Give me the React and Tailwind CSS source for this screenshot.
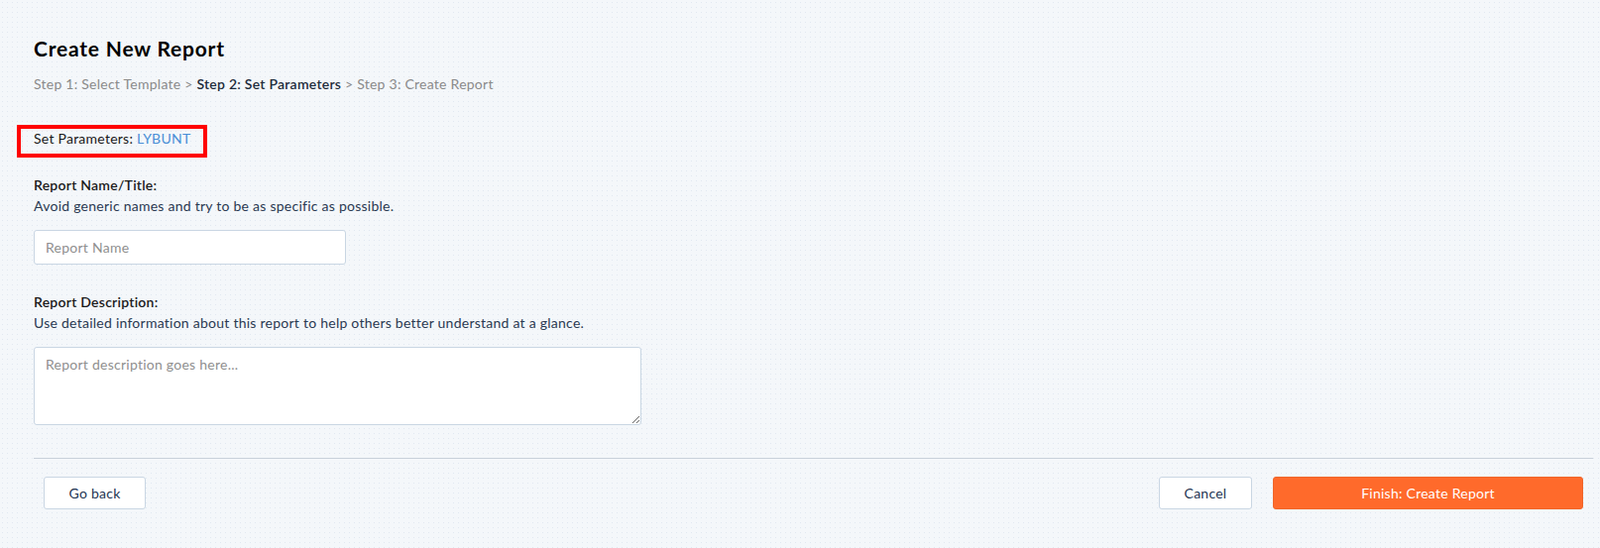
export default function App() {
    return (
        <div className="min-h-[553px] w-full bg-[#f4f7fa] bg-[radial-gradient(#e1e8f1_0.8px,transparent_0.8px)] bg-[size:5px_5px] pl-[34px] pr-[7px] pt-[35px] font-['Lato','Liberation_Sans',sans-serif] tracking-[0.25px]">
            <h1 className="text-[21px] leading-[28px] font-bold tracking-[0.8px] text-black">Create New Report</h1>
            <p className="mt-[12px] text-[14px] leading-[20px] text-[#8a8a8a]">
                Step 1: Select Template &gt;{' '}
                <span className="font-semibold text-[#1d2b3a]">Step 2: Set Parameters</span>{' '}
                &gt; Step 3: Create Report
            </p>

            <div className="mt-[31px] -ml-[17px] w-fit border-4 border-[#ff0000] px-[13px] pt-0 pb-[5px]">
                <p className="text-[14px] leading-[20px] text-[#1a1a1a]">
                    Set Parameters: <span className="text-[#4a8fd6]">LYBUNT</span>
                </p>
            </div>

            <div className="mt-[17px]">
                <label htmlFor="name" className="block text-[14px] leading-[21px] font-semibold text-[#1a1a1a]">
                    Report Name/Title:
                </label>
                <p className="text-[14px] leading-[21px] text-[#2b3a52]">
                    Avoid generic names and try to be as specific as possible.
                </p>
                <input
                    id="name"
                    type="text"
                    placeholder="Report Name"
                    className="mt-[14px] block h-[35px] w-[315px] rounded-[3px] border border-[#c9d6e3] bg-white px-[11px] text-[14px] text-[#222] placeholder:text-[#8f8f8f] outline-none"
                />
            </div>

            <div className="mt-[27px]">
                <label htmlFor="desc" className="block text-[14px] leading-[21px] font-semibold text-[#1a1a1a]">
                    Report Description:
                </label>
                <p className="text-[14px] leading-[21px] text-[#2b3a52]">
                    Use detailed information about this report to help others better understand at a glance.
                </p>
                <textarea
                    id="desc"
                    placeholder="Report description goes here..."
                    className="mt-[14px] block h-[79px] w-[613px] rounded-[3px] border border-[#c9d6e3] bg-white px-[11px] py-[7px] text-[14px] leading-[20px] text-[#222] placeholder:text-[#8f8f8f] outline-none"
                />
            </div>

            <div className="mt-[33px] border-t border-[#c8d0da]" />

            <div className="flex items-center justify-between px-[10px] pt-[18px]">
                <button className="h-[33px] w-[103px] rounded-[3px] border border-[#c9d6e3] bg-white text-[14px] text-[#1e3553]">
                    Go back
                </button>
                <div className="flex items-center gap-[21px]">
                    <button className="h-[33px] w-[94px] rounded-[3px] border border-[#c9d6e3] bg-white text-[14px] text-[#1e3553]">
                        Cancel
                    </button>
                    <button className="h-[33px] w-[313px] rounded-[3px] border border-[#f0662a] bg-[#ff6a2b] text-[14px] text-white">
                        Finish: Create Report
                    </button>
                </div>
            </div>
        </div>
    )
}
